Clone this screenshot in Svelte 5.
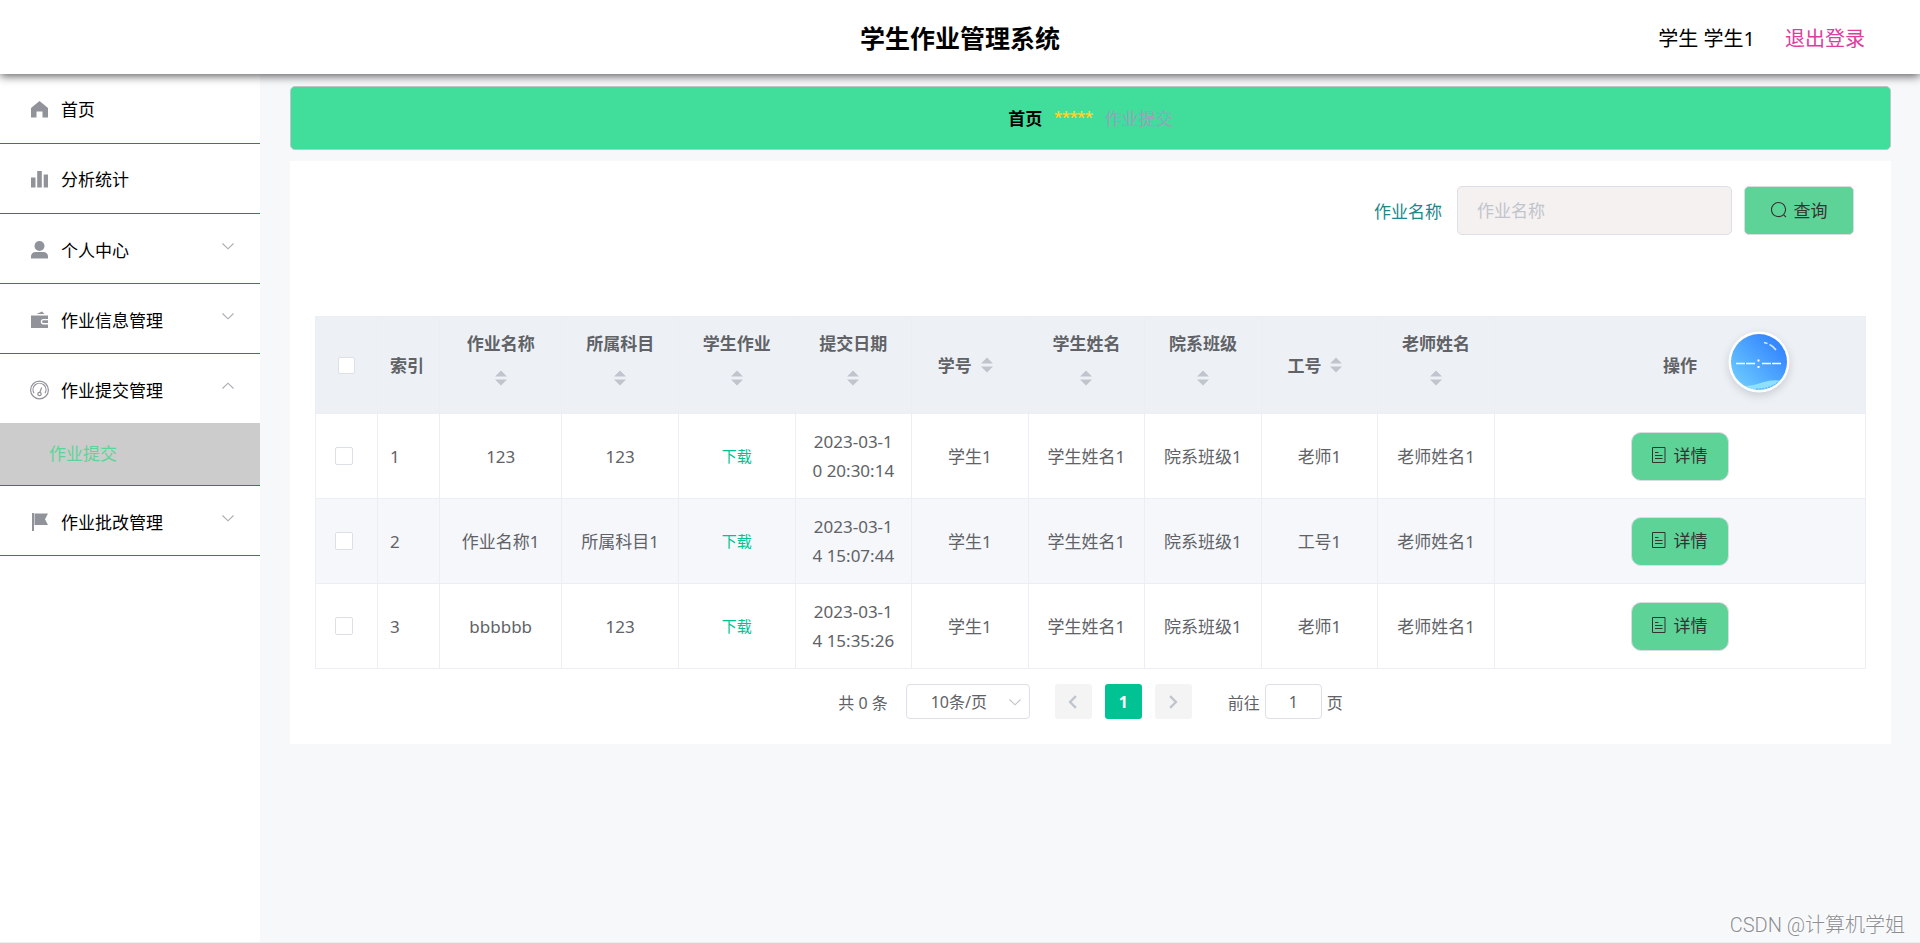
<script lang="ts">
	type MenuItem = {
		label: string;
		icon: string;
		children?: string[];
		open?: boolean;
	};

	let menus = $state<MenuItem[]>([
		{ label: '首页', icon: 'home' },
		{ label: '分析统计', icon: 'data' },
		{ label: '个人中心', icon: 'user', children: [] },
		{ label: '作业信息管理', icon: 'wallet', children: [] },
		{ label: '作业提交管理', icon: 'odometer', children: ['作业提交'], open: true },
		{ label: '作业批改管理', icon: 'flag', children: [] }
	]);

	// Sortable columns between the index and the action column
	const columns = [
		{ key: 'name', label: '作业名称' },
		{ key: 'subject', label: '所属科目' },
		{ key: 'file', label: '学生作业' },
		{ key: 'date', label: '提交日期' },
		{ key: 'studentNo', label: '学号' },
		{ key: 'student', label: '学生姓名' },
		{ key: 'class', label: '院系班级' },
		{ key: 'teacherNo', label: '工号' },
		{ key: 'teacher', label: '老师姓名' }
	];

	const rows: Record<string, string>[] = [
		{ name: '123', subject: '123', file: '下载', date: '2023-03-10 20:30:14', studentNo: '学生1', student: '学生姓名1', class: '院系班级1', teacherNo: '老师1', teacher: '老师姓名1' },
		{ name: '作业名称1', subject: '所属科目1', file: '下载', date: '2023-03-14 15:07:44', studentNo: '学生1', student: '学生姓名1', class: '院系班级1', teacherNo: '工号1', teacher: '老师姓名1' },
		{ name: 'bbbbbb', subject: '123', file: '下载', date: '2023-03-14 15:35:26', studentNo: '学生1', student: '学生姓名1', class: '院系班级1', teacherNo: '老师1', teacher: '老师姓名1' }
	];

	let keyword = $state('');
	let page = $state('1');
	let selected = $state(rows.map(() => false));

	function toggleAll(e: Event) {
		const checked = (e.target as HTMLInputElement).checked;
		selected = rows.map(() => checked);
	}
</script>

{#snippet menuIcon(name: string)}
	<svg class="menu-icon" viewBox="0 0 20 20" aria-hidden="true">
		{#if name === 'home'}
			<path d="M1 9 L9.500 2 L18 9 V18.500 H12.500 V12.500 H6.500 V18.500 H1 Z" />
		{:else if name === 'data'}
			<path d="M1 8.500h4.500v10H1zM7.200 2h4.600v16.500H7.200zM13.700 5.500h4.300v13h-4.300z" />
		{:else if name === 'user'}
			<circle cx="9.500" cy="6" r="5" />
			<path d="M1 18.500V16.500a4.500 4.500 0 0 1 4.500-4.500h8a4.500 4.500 0 0 1 4.500 4.500v2z" />
		{:else if name === 'wallet'}
			<path d="M6.500 4 L12 1.500 L14.500 4 Z M1 5.500H18V9h-4.500a2.700 2.700 0 0 0 0 5.400H18V18H1Z" />
			<path d="M13.500 10.300H18v2.800h-4.500a1.400 1.400 0 0 1 0-2.800z" />
		{:else if name === 'odometer'}
			<g fill="none" stroke="currentColor" stroke-width="1.200">
				<circle cx="9.500" cy="10" r="8.900" />
				<path d="M4 13.200a6.500 6.500 0 1 1 11 0" />
				<circle cx="9.500" cy="14" r="1.700" />
				<path d="M9.900 12.300 L11.700 7.500" />
			</g>
		{:else}
			<path d="M2 1h2v18H2zM4.500 1.500H18L15 7.200L18 13H4.500z" />
		{/if}
	</svg>
{/snippet}

{#snippet chevron(dir: string)}
	<svg class="chevron {dir}" viewBox="0 0 12 12" aria-hidden="true">
		<path d="M0.500 3.500 L6 8.800 L11.500 3.500" fill="none" stroke="currentColor" stroke-width="1.100" />
	</svg>
{/snippet}

<div class="page">
	<header>
		<h1>学生作业管理系统</h1>
		<div class="account">
			<span>学生 学生1</span>
			<a href="#logout">退出登录</a>
		</div>
	</header>

	<div class="layout">
		<nav>
			<ul>
				{#each menus as item}
					<li>
						{#if item.children}
							<button type="button" class="menu-title sub" aria-expanded={!!item.open} onclick={() => (item.open = !item.open)}>
								{@render menuIcon(item.icon)}
								<span>{item.label}</span>
								{@render chevron(item.open ? 'up' : 'down')}
							</button>
							{#if item.open}
								{#each item.children as child}
									<a class="child" href="#submit">{child}</a>
								{/each}
							{/if}
						{:else}
							<a class="menu-title" href="#{item.icon}">
								{@render menuIcon(item.icon)}
								<span>{item.label}</span>
							</a>
						{/if}
					</li>
				{/each}
			</ul>
		</nav>

		<main>
			<div class="breadcrumb">
				<a href="#home">首页</a>
				<span class="stars">*****</span>
				<span class="current">作业提交</span>
			</div>

			<section class="card">
				<form class="search" onsubmit={(e) => e.preventDefault()}>
					<label for="keyword">作业名称</label>
					<input id="keyword" type="text" placeholder="作业名称" bind:value={keyword} />
					<button type="submit" class="btn">
						<svg class="search-icon" viewBox="0 0 16 16" aria-hidden="true">
							<path d="M12.200 12.800a7 7 0 1 1 .5-.5M12.200 12.300l2.800 2.900" fill="none" stroke="currentColor" stroke-width="1.100" />
						</svg>
						查询
					</button>
				</form>

				<table>
					<colgroup>
						<col class="w-small" />
						<col class="w-small" />
						{#each columns as col, i}
							<col class={i === 0 ? 'w-name' : 'w-cell'} />
						{/each}
						<col />
					</colgroup>
					<thead>
						<tr>
							<th><input type="checkbox" aria-label="全选" checked={selected.every(Boolean)} onchange={toggleAll} /></th>
							<th class="left">索引</th>
							{#each columns as col}
								<th>
									<div class="head" class:stacked={col.label.length > 2}>
										<span>{col.label}</span>
										<svg class="sort" viewBox="0 0 12 16" aria-hidden="true">
											<path d="M0 6.500 L6 0.500 L12 6.500 Z M0 9.500 L6 15.500 L12 9.500 Z" />
										</svg>
									</div>
								</th>
							{/each}
							<th>操作</th>
						</tr>
					</thead>
					<tbody>
						{#each rows as row, i}
							<tr>
								<td class="check"><input type="checkbox" aria-label="选择第{i + 1}行" bind:checked={selected[i]} /></td>
								<td class="left">{i + 1}</td>
								{#each columns as col}
									<td>
										{#if col.key === 'file'}
											<a class="download" href="#download">{row.file}</a>
										{:else}
											{row[col.key]}
										{/if}
									</td>
								{/each}
								<td>
									<button type="button" class="btn detail">
										<svg class="doc-icon" viewBox="0 0 14 16" aria-hidden="true">
											<path d="M0.500 0.500h12.500v15H0.500zM3 5.500h3.500M3 8.500h7.500M3 11.500h7.500" fill="none" stroke="currentColor" />
										</svg>
										详情
									</button>
								</td>
							</tr>
						{/each}
					</tbody>
				</table>

				<div class="pagination">
					<span class="total">共 0 条</span>
					<div class="size">
						<select aria-label="每页条数">
							<option>10条/页</option>
							<option>20条/页</option>
							<option>50条/页</option>
						</select>
						{@render chevron('down')}
					</div>
					<div class="pager">
						<button type="button" disabled aria-label="上一页">
							<svg viewBox="0 0 12 12"><path d="M8.500 1 L3.500 6 L8.500 11" /></svg>
						</button>
						<button type="button" class="active">1</button>
						<button type="button" disabled aria-label="下一页">
							<svg viewBox="0 0 12 12"><path d="M3.500 1 L8.500 6 L3.500 11" /></svg>
						</button>
					</div>
					<label class="jump">前往 <input type="text" bind:value={page} /> 页</label>
				</div>
			</section>
		</main>
	</div>

	<!-- floating timer bubble -->
	<svg class="bubble" viewBox="0 0 62 62" aria-hidden="true">
		<defs>
			<linearGradient id="bubble-fill" x1="0" y1="1" x2="1" y2="0">
				<stop offset="0.1" stop-color="#6ccbff" />
				<stop offset="0.9" stop-color="#2f80ff" />
			</linearGradient>
			<clipPath id="bubble-clip"><circle cx="31" cy="31" r="28" /></clipPath>
		</defs>
		<circle cx="31" cy="31" r="30.500" fill="#fff" />
		<circle cx="31" cy="31" r="28" fill="url(#bubble-fill)" />
		<path d="M18 55 Q28 54 36 51 T56 50 V62 H18 Z" fill="#8fe0ff" clip-path="url(#bubble-clip)" />
		<path d="M28 58 Q42 58 50 51" fill="none" stroke="#4da6ff" stroke-dasharray="2 1" />
		<path d="M36 11.500 L39.500 12.500 M41.500 13.500 Q45 15 48 19" fill="none" stroke="#cfe8ff" stroke-width="1.500" />
		<path d="M8 32.500h9M18 32.500h9M34 32.500h9M44 32.500h9" stroke="#fff" stroke-width="1.400" />
		<path d="M29.500 29.500h2M29.500 36h2" stroke="#fff" stroke-width="2" />
	</svg>

	<div class="watermark">CSDN @计算机学姐</div>
</div>

<style>
	:global(body) {
		background: #f7f8fa;
	}

	.page {
		position: relative;
		display: flex;
		flex-direction: column;
		min-height: 100vh;
		color: #000;
		font-family: 'Noto Sans', 'Noto Sans CJK SC', sans-serif;
		font-size: 17px;
	}

	.page * {
		box-sizing: border-box;
	}

	button,
	input,
	select {
		font: inherit;
	}

	a {
		text-decoration: none;
	}

	header {
		position: relative;
		z-index: 1;
		display: grid;
		grid-template-columns: 1fr auto 1fr;
		align-items: center;
		height: 74px;
		padding: 0 55px;
		background: #fff;
		box-shadow: 0 2px 9px rgba(0, 0, 0, 0.65);
	}

	h1 {
		grid-column: 2;
		margin: 0;
		font-size: 25px;
		font-weight: 700;
	}

	.account {
		display: flex;
		justify-content: flex-end;
		gap: 30px;
		font-size: 20px;
	}

	.account a {
		color: #e03c9f;
	}

	.layout {
		display: flex;
		flex: 1;
		border-bottom: 1px solid #eee;
	}

	/* sidebar */
	nav {
		flex: 0 0 260px;
		background: #fff;
	}

	ul {
		margin: 0;
		padding: 0;
		list-style: none;
	}

	li {
		border-bottom: 1px solid #44794a;
	}

	.menu-title {
		display: flex;
		align-items: center;
		width: 100%;
		height: 69px;
		padding: 0 26px 0 30px;
		border: 0;
		background: none;
		color: #000;
		text-align: left;
	}

	.menu-title.sub {
		padding-top: 2px;
	}

	.menu-title span {
		flex: 1;
	}

	.menu-icon {
		width: 20px;
		height: 20px;
		margin-right: 11px;
		fill: #909399;
		color: #909399;
	}

	.chevron {
		width: 12px;
		height: 12px;
		color: #a9abb0;
	}

	.chevron.up {
		transform: rotate(180deg);
	}

	.menu-title .chevron {
		margin-bottom: 8px;
	}

	.child {
		display: block;
		padding-left: 49px;
		background: #ccc;
		color: #5cd497;
		line-height: 62px;
	}

	/* content */
	main {
		flex: 1;
		min-width: 0;
		padding: 12px 29px 12px 30px;
	}

	.breadcrumb {
		display: flex;
		align-items: center;
		justify-content: center;
		gap: 12px;
		height: 64px;
		margin-bottom: 11px;
		padding-bottom: 2px;
		border: 1px solid #c0c4cc;
		border-radius: 5px;
		background: #40dd9b;
	}

	.breadcrumb a {
		color: #000;
		font-weight: 700;
	}

	.stars {
		color: #ffd22e;
		font-family: Roboto, sans-serif;
		font-weight: 700;
	}

	.current {
		color: #97a3b6;
	}

	.card {
		padding: 25px;
		background: #fff;
	}

	.search {
		display: flex;
		align-items: center;
		justify-content: flex-end;
		gap: 12px;
		margin-bottom: 81px;
		padding-right: 12px;
	}

	.search label {
		margin-right: 3px;
		color: #20878a;
	}

	.search input {
		width: 275px;
		height: 49px;
		padding: 0 19px;
		border: 1px solid #dcdfe6;
		border-radius: 5px;
		background: #f5f1f0;
		color: #606266;
	}

	.search input::placeholder {
		color: #c0c4cc;
	}

	.btn {
		display: inline-flex;
		align-items: center;
		justify-content: center;
		gap: 7px;
		width: 110px;
		height: 49px;
		padding: 0 0 2px;
		border: 1px solid #d8dce5;
		border-radius: 5px;
		background: #5dd397;
		color: #333;
	}

	.btn.detail {
		width: 98px;
		border-radius: 10px;
	}

	.search-icon {
		width: 16px;
		height: 16px;
	}

	.doc-icon {
		width: 14px;
		height: 16px;
	}

	/* table */
	table {
		width: 100%;
		table-layout: fixed;
		border-collapse: collapse;
		color: #606266;
		line-height: 29px;
	}

	.w-small {
		width: 4%;
	}

	.w-name {
		width: 7.9%;
	}

	.w-cell {
		width: 7.52%;
	}

	th,
	td {
		padding: 0 14px;
		border: 1px solid #ebeef5;
		text-align: center;
		word-break: break-all;
	}

	th {
		height: 97px;
		background: #edf1f6;
		font-weight: 700;
	}

	td {
		height: 85px;
	}

	th.left,
	td.left {
		padding: 0 12px;
		text-align: left;
	}

	td.check {
		padding: 0 19px;
		text-align: left;
	}

	tbody tr:nth-child(even) {
		background: #f5f7fb;
	}

	input[type='checkbox'] {
		display: block;
		width: 17px;
		height: 17px;
		margin: 0 auto;
		border: 1px solid #dcdfe6;
		border-radius: 2px;
		background: #fff;
		appearance: none;
	}

	input[type='checkbox']:checked {
		background: #00c292;
	}

	td.check input {
		width: 18px;
		height: 18px;
		margin: 0;
	}

	.head {
		display: flex;
		align-items: center;
		justify-content: center;
		margin: 0 -14px;
	}

	.head.stacked {
		flex-direction: column;
		gap: 12px;
		padding-bottom: 16px;
	}

	.sort {
		width: 12px;
		height: 16px;
		margin: 0 9px;
		fill: #c0c4cc;
	}

	.download {
		color: #00c292;
		font-size: 15px;
	}

	/* pagination */
	.pagination {
		display: flex;
		align-items: center;
		justify-content: center;
		margin-top: 15px;
		color: #606266;
		font-size: 16px;
	}

	.size {
		position: relative;
		margin: 0 25px 0 18px;
	}

	.size select {
		width: 124px;
		height: 35px;
		padding: 0 24px;
		border: 1px solid #dcdfe6;
		border-radius: 4px;
		background: #fff;
		color: #606266;
		appearance: none;
	}

	.size .chevron {
		position: absolute;
		top: 12px;
		right: 9px;
		color: #c0c4cc;
		pointer-events: none;
	}

	.pager {
		display: flex;
		gap: 13px;
	}

	.pager button {
		width: 37px;
		height: 35px;
		padding: 0;
		border: 0;
		border-radius: 3px;
		background: #f4f4f5;
		color: #c0c4cc;
		font-weight: 700;
	}

	.pager button.active {
		background: #00c292;
		color: #fff;
	}

	.pager svg {
		display: block;
		width: 14px;
		height: 14px;
		margin: 0 auto;
		fill: none;
		stroke: currentColor;
		stroke-width: 2;
	}

	.jump {
		display: flex;
		align-items: center;
		gap: 5px;
		margin-left: 36px;
	}

	.jump input {
		width: 57px;
		height: 35px;
		padding: 0;
		border: 1px solid #dcdfe6;
		border-radius: 4px;
		color: #606266;
		text-align: center;
	}

	/* overlays */
	.bubble {
		position: absolute;
		top: 331px;
		right: 130px;
		width: 62px;
		height: 62px;
		border-radius: 50%;
		filter: drop-shadow(0 3px 4px rgba(0, 0, 0, 0.15));
	}

	.watermark {
		position: absolute;
		right: 15px;
		bottom: 4px;
		color: #8c8e92;
		font-family: Roboto, 'Noto Sans CJK SC', sans-serif;
		font-size: 20px;
		font-weight: 300;
		line-height: 28px;
		text-shadow: -1px -1px 0 #fff;
	}
</style>
